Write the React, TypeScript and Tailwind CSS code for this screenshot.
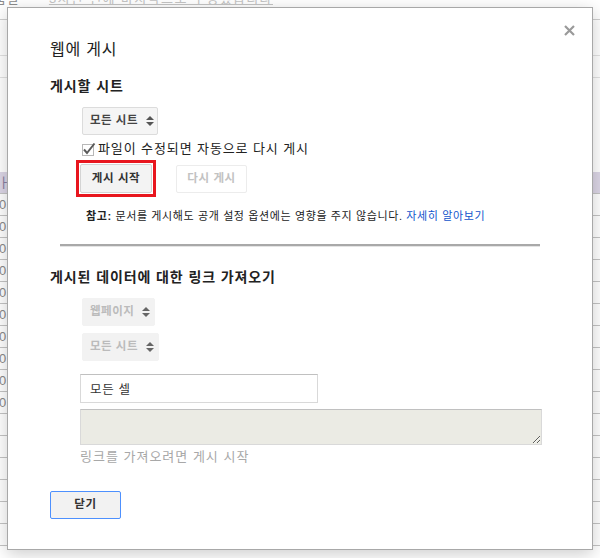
import React from "react";

const FONT = "font-['Liberation_Sans','Noto_Sans_CJK_KR',sans-serif]";

function Arrows({ color }: { color: string }) {
  return (
    <svg width="8" height="12" viewBox="0 0 8 12" className="shrink-0">
      <path d="M0 5 L4 1 L8 5 Z" fill={color} />
      <path d="M0 7 L4 11 L8 7 Z" fill={color} />
    </svg>
  );
}

function Select({ label, disabled }: { label: string; disabled?: boolean }) {
  return (
    <div
      className={
        disabled
          ? "flex h-[28px] w-fit items-center gap-[8px] rounded-[2px] border border-[#f2f2f2] bg-[#f2f2f2] pl-[7px] pr-[4px] text-[11.5px] font-bold tracking-[0.5px] text-[#bbbbbb]"
          : "flex h-[28px] w-fit items-center gap-[8px] rounded-[2px] border border-[#dcdcdc] bg-[#f5f5f5] pl-[7px] pr-[3px] text-[11.5px] font-bold tracking-[0.5px] text-[#444444]"
      }
    >
      <span>{label}</span>
      <Arrows color={disabled ? "#666666" : "#555555"} />
    </div>
  );
}

function CheckBox() {
  return (
    <svg width="15" height="15" viewBox="0 0 15 15" className="shrink-0">
      <rect x="1.5" y="2.5" width="11" height="11" fill="#ffffff" stroke="#b8b8b8" />
      <path d="M3 7.5 L6 11 L13.5 1.5" fill="none" stroke="#5a5a5a" strokeWidth="2" />
    </svg>
  );
}

function SheetRow({ purple, zero }: { purple?: boolean; zero?: boolean }) {
  return (
    <div
      className={
        purple
          ? "flex h-[22px] shrink-0 items-center border-b border-[#c4c4c4] bg-[#dcd6e6] text-[13px] text-[#8a80a0]"
          : "flex h-[22px] shrink-0 items-center border-b border-[#c4c4c4] text-[13px] text-[#8a8a8a]"
      }
    >
      {purple ? <span className="-ml-[2px]">ㅏ</span> : null}
      {zero ? <span className="-ml-[1px]">0</span> : null}
    </div>
  );
}

export default function App() {
  return (
    <div className={`relative h-[558px] w-[600px] overflow-hidden bg-white ${FONT}`}>
      {/* background sheet (faded under modal) */}
      <div className="flex h-full flex-col">
        <div className="flex h-[20px] shrink-0 border-b border-[#cfcfcf] text-[13px]">
          <span className="-ml-[19px] -mt-[11px] tracking-[1px] text-[#8c8c8c]">도움말</span>
          <span className="ml-[29px] -mt-[11px] tracking-[1.4px] text-[#c4c4c4] underline">3시간 전에 마지막으로 수정했습니다</span>
        </div>
        <div className="h-[36px] shrink-0 border-b border-[#e2e2e2]" />
        <div className="h-[22px] shrink-0 border-b border-[#e2e2e2]" />
        <div className="h-[94px] shrink-0" />
        <SheetRow purple />
        <SheetRow zero />
        <SheetRow zero />
        <SheetRow zero />
        <SheetRow zero />
        <SheetRow zero />
        <SheetRow zero />
        <SheetRow zero />
        <SheetRow zero />
        <SheetRow zero />
        <SheetRow zero />
        <SheetRow />
        <SheetRow />
        <SheetRow />
        <SheetRow />
        <SheetRow />
        <SheetRow />
      </div>

      {/* modal dialog */}
      <div className="absolute left-[7px] top-[7px] flex h-[543px] w-[586px] flex-col border border-[#a8a8a8] bg-white pl-[42px] shadow-[0_4px_16px_rgba(0,0,0,0.2)]">
        <button className="absolute right-[16px] top-[16px] flex h-[13px] w-[13px] items-center justify-center">
          <svg width="11" height="11" viewBox="0 0 11 11">
            <path d="M1 1 L10 10 M10 1 L1 10" stroke="#9a9a9a" strokeWidth="2.2" />
          </svg>
        </button>

        <div className="mt-[32px] h-[20px] text-[16px] leading-[20px] tracking-[0.8px] text-[#222222]">웹에 게시</div>

        <div className="mt-[17px] h-[18px] text-[14px] font-bold leading-[18px] tracking-[0.9px] text-[#222222]">게시할 시트</div>

        <div className="ml-[32px] mt-[12px]">
          <Select label="모든 시트" />
        </div>

        <div className="ml-[31px] mt-[6px] flex h-[16px] items-center gap-[2px] text-[13px] leading-[16px] tracking-[0.9px] text-[#222222]">
          <CheckBox />
          <span>파일이 수정되면 자동으로 다시 게시</span>
        </div>

        <div className="ml-[26px] mt-[3px] flex items-center">
          <div className="border-[3px] border-[#e8161e] p-[1px]">
            <button className="flex h-[29px] w-[72px] items-center justify-center rounded-[2px] border border-[#d4d4d4] bg-[#f3f3f3] text-[11.5px] font-bold tracking-[0.6px] text-[#333333]">
              게시 시작
            </button>
          </div>
          <button className="ml-[20px] flex h-[28px] w-[71px] items-center justify-center rounded-[2px] border border-[#ececec] bg-white text-[11.5px] font-bold tracking-[0.6px] text-[#c2c2c2]">
            다시 게시
          </button>
        </div>

        <div className="ml-[36px] mt-[11px] h-[16px] text-[11px] leading-[16px] tracking-[0.62px] text-[#222222]">
          <span className="font-bold">참고:</span> 문서를 게시해도 공개 설정 옵션에는 영향을 주지 않습니다.{" "}
          <span className="text-[#1155cc]">자세히 알아보기</span>
        </div>

        <div className="ml-[10px] mt-[20px] h-[3px] w-[480px] border-t-2 border-b border-t-[#a9a9a9] border-b-[#e4e4e4]" />

        <div className="mt-[21px] h-[18px] text-[14px] font-bold leading-[18px] tracking-[0.9px] text-[#222222]">게시된 데이터에 대한 링크 가져오기</div>

        <div className="ml-[32px] mt-[12px]">
          <Select label="웹페이지" disabled />
        </div>
        <div className="ml-[32px] mt-[7px]">
          <Select label="모든 시트" disabled />
        </div>

        <input
          readOnly
          value="모든 셀"
          className="ml-[30px] mt-[13px] h-[29px] w-[238px] border border-[#d9d9d9] border-t-[#c0c0c0] bg-white pl-[9px] text-[12.5px] tracking-[0.7px] text-[#333333] outline-none"
        />

        <textarea
          disabled
          className="ml-[30px] mt-[6px] block h-[36px] w-[462px] resize-y border border-[#d9d9d9] border-t-[#c0c0c0] bg-[#ebebe4]"
        />

        <div className="ml-[30px] mt-[4px] h-[16px] text-[13px] leading-[16px] tracking-[1px] text-[#a8a8a8]">링크를 가져오려면 게시 시작</div>

        <button className="mt-[26px] flex h-[28px] w-[71px] items-center justify-center rounded-[2px] border border-[#4d90fe] bg-[#f2f2f2] text-[11.5px] font-bold tracking-[0.6px] text-[#333333]">
          닫기
        </button>
      </div>
    </div>
  );
}
